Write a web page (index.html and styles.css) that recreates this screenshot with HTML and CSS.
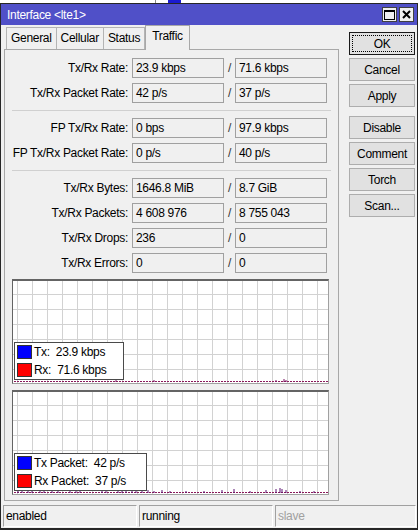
FILE: index.html
```html
<!DOCTYPE html>
<html lang="en">
<head>
    <meta charset="UTF-8">
    <title>Interface &lt;lte1&gt;</title>
    <link rel="stylesheet" href="styles.css">
</head>
<body>
    <div class="desk">
        <span class="desk-edge"></span>
        <span class="desk-icon"></span>
    </div>
    <div class="window">
        <div class="titlebar">
            <span class="title">Interface &lt;lte1&gt;</span>
            <div class="tb-btns">
                <span class="tb-btn"><span class="max-box"></span></span>
                <span class="tb-btn">
                    <svg width="9" height="9" viewBox="0 0 9 9"><path d="M1 1 L8 8 M8 1 L1 8" stroke="#000" stroke-width="2"/></svg>
                </span>
            </div>
        </div>
        <div class="main">
            <div class="left">
                <div class="tabs">
                    <span class="tab">General</span>
                    <span class="tab">Cellular</span>
                    <span class="tab">Status</span>
                    <span class="tab active">Traffic</span>
                </div>
                <div class="panel">
                    <div class="group">
                        <div class="row"><span class="label">Tx/Rx Rate:</span><span class="field">23.9 kbps</span><span class="slash">/</span><span class="field">71.6 kbps</span></div>
                        <div class="row"><span class="label">Tx/Rx Packet Rate:</span><span class="field">42 p/s</span><span class="slash">/</span><span class="field">37 p/s</span></div>
                    </div>
                    <div class="sep"></div>
                    <div class="group">
                        <div class="row"><span class="label">FP Tx/Rx Rate:</span><span class="field">0 bps</span><span class="slash">/</span><span class="field">97.9 kbps</span></div>
                        <div class="row"><span class="label">FP Tx/Rx Packet Rate:</span><span class="field">0 p/s</span><span class="slash">/</span><span class="field">40 p/s</span></div>
                    </div>
                    <div class="sep"></div>
                    <div class="group">
                        <div class="row"><span class="label">Tx/Rx Bytes:</span><span class="field">1646.8 MiB</span><span class="slash">/</span><span class="field">8.7 GiB</span></div>
                        <div class="row"><span class="label">Tx/Rx Packets:</span><span class="field">4 608 976</span><span class="slash">/</span><span class="field">8 755 043</span></div>
                        <div class="row"><span class="label">Tx/Rx Drops:</span><span class="field">236</span><span class="slash">/</span><span class="field">0</span></div>
                        <div class="row"><span class="label">Tx/Rx Errors:</span><span class="field">0</span><span class="slash">/</span><span class="field">0</span></div>
                    </div>

                    <div class="graph">
                        <div class="legend">
                            <div class="legend-row"><span class="swatch tx"></span><span class="legend-text">Tx:  23.9 kbps</span></div>
                            <div class="legend-row"><span class="swatch rx"></span><span class="legend-text">Rx:  71.6 kbps</span></div>
                        </div>
                        <svg class="trace" width="315" height="4" viewBox="0 0 315 4">
                            <path d="M0 3.5 H315" stroke="#8a1a5a" stroke-width="1" stroke-dasharray="2 1"/>
                            <path d="M102 2 V4 M140 2 V4 M262 2 V4 M270 1 V4 M272 2 V4" stroke="#7a1060" stroke-width="1"/>
                        </svg>
                    </div>

                    <div class="graph">
                        <div class="legend wide">
                            <div class="legend-row"><span class="swatch tx"></span><span class="legend-text">Tx Packet:  42 p/s</span></div>
                            <div class="legend-row"><span class="swatch rx"></span><span class="legend-text">Rx Packet:  37 p/s</span></div>
                        </div>
                        <svg class="trace" width="315" height="6" viewBox="0 0 315 6">
                            <path d="M0 5.5 H315" stroke="#8a1a5a" stroke-width="1" stroke-dasharray="2 1"/>
                            <path d="M4 3 V6 M8 3 V6 M14 3 V6 M18 4 V6 M26 3 V6 M30 3 V6 M38 3 V6 M44 4 V6 M56 3 V6 M62 3 V6 M66 4 V6 M88 3 V6 M92 3 V6 M104 3 V6 M108 3 V6 M112 3 V6 M118 3 V6 M122 4 V6 M128 3 V6 M134 3 V6 M140 4 V6 M148 3 V6 M156 4 V6 M172 4 V6 M190 4 V6 M208 3 V6 M220 2 V6 M236 4 V6 M252 3 V6 M262 2 V6 M266 1 V6 M268 2 V6 M272 3 V6 M286 4 V6 M300 4 V6" stroke="#5a1070" stroke-width="1"/>
                        </svg>
                    </div>
                </div>
            </div>
            <div class="buttons">
                <span class="btn default"><span class="focus">OK</span></span>
                <span class="btn">Cancel</span>
                <span class="btn">Apply</span>
                <span class="btn gap">Disable</span>
                <span class="btn">Comment</span>
                <span class="btn">Torch</span>
                <span class="btn">Scan...</span>
            </div>
        </div>
        <div class="statusbar">
            <span class="status s1">enabled</span>
            <span class="status s2">running</span>
            <span class="status s3 dim">slave</span>
        </div>
    </div>
</body>
</html>
```

FILE: styles.css
```css
* {
    margin: 0;
    padding: 0;
    box-sizing: border-box;
}
body {
    width: 418px;
    height: 531px;
    overflow: hidden;
    background-color: #fff;
    font-family: "Liberation Sans", Arial, sans-serif;
    font-size: 12px;
    letter-spacing: -0.3px;
    color: #000;
}
.desk {
    height: 3px;
    display: flex;
}
.desk-edge {
    width: 1px;
    margin-left: 155px;
    background-color: #888;
}
.desk-icon {
    width: 13px;
    margin-left: 12px;
    background-color: #1b1bd0;
}
.window {
    height: 527px;
    border: 1px solid #262626;
    border-bottom-width: 2px;
    background-color: #f0f0f0;
    display: flex;
    flex-direction: column;
}
.titlebar {
    height: 21px;
    background-color: #5050c8;
    display: flex;
    align-items: center;
    justify-content: space-between;
    padding: 0 3px 0 6px;
}
.title {
    color: #fff;
    font-size: 12px;
}
.tb-btns {
    display: flex;
    gap: 2px;
}
.tb-btn {
    width: 15px;
    height: 15px;
    background-color: #f0f0f0;
    border: 1px solid #404040;
    display: flex;
    align-items: center;
    justify-content: center;
}
.max-box {
    width: 11px;
    height: 10px;
    border: 1px solid #000;
    border-top-width: 2px;
}
.main {
    flex: 1;
    display: flex;
    padding: 0 0 0 3px;
}
.left {
    width: 335px;
    display: flex;
    flex-direction: column;
}
.tabs {
    display: flex;
    align-items: flex-end;
    height: 24px;
    padding-left: 2px;
}
.tab {
    height: 22px;
    padding: 0 4px;
    border: 1px solid #b4b4b4;
    border-bottom: none;
    margin-right: -1px;
    line-height: 20px;
    background-color: #f0f0f0;
}
.tab.active {
    height: 25px;
    padding: 0 6px;
    line-height: 20px;
    border-color: #a8a8a8;
    position: relative;
    margin-bottom: -1px;
    margin-left: 1px;
    z-index: 1;
}
.panel {
    height: 452px;
    border: 1px solid #a8a8a8;
    padding: 8px 7px 0 7px;
    display: flex;
    flex-direction: column;
}
.group {
    display: flex;
    flex-direction: column;
    gap: 5px;
}
.row {
    display: flex;
    height: 20px;
    align-items: center;
}
.label {
    width: 122px;
    text-align: right;
    padding-right: 4px;
    margin-left: -2px;
    white-space: nowrap;
}
.field {
    width: 92px;
    height: 20px;
    border: 1px solid #a0a0a0;
    background-color: #f0f0f0;
    padding-left: 3px;
    line-height: 18px;
    white-space: nowrap;
}
.slash {
    width: 11px;
    text-align: center;
    color: #333;
}
.sep {
    height: 1px;
    background-color: #d0d0d0;
    margin: 7px 0 7px 0;
}
.graph {
    margin-top: 6px;
    width: 317px;
    height: 105px;
    border: 1px solid #a0a0a0;
    border-top-color: #646464;
    border-left-color: #646464;
    border-top-width: 2px;
    background-color: #fff;
    background-image:
        linear-gradient(to right, #d2d2d2 1px, transparent 1px),
        linear-gradient(to bottom, #d2d2d2 1px, transparent 1px);
    background-size: 15px 15px;
    background-position: 4px 13px;
    display: flex;
    flex-direction: column;
    justify-content: flex-end;
    padding: 0 1px 1px 1px;
    position: relative;
}
.legend {
    position: absolute;
    left: 1px;
    bottom: 3px;
    width: 110px;
    height: 38px;
    background-color: #fff;
    border: 1px solid #4a4a4a;
    padding: 1px 0 0 2px;
    display: flex;
    flex-direction: column;
    gap: 2px;
}
.legend.wide {
    width: 133px;
}
.legend-row {
    display: flex;
    align-items: center;
    height: 16px;
    gap: 2px;
}
.swatch {
    width: 15px;
    height: 14px;
    border: 1px solid #333;
}
.swatch.tx {
    background-color: #0000ff;
}
.swatch.rx {
    background-color: #ff0000;
}
.legend-text {
    white-space: pre;
}
.trace {
    display: block;
}
.buttons {
    display: flex;
    flex-direction: column;
    gap: 3px;
    padding: 7px 0 0 10px;
}
.btn {
    width: 66px;
    height: 23px;
    border: 1px solid #adadad;
    background-color: #e1e1e1;
    display: flex;
    align-items: center;
    justify-content: center;
}
.btn.gap {
    margin-top: 6px;
}
.btn.default {
    border-color: #1a1a1a;
    padding: 2px;
}
.focus {
    width: 100%;
    height: 100%;
    border: 1px dotted #000;
    display: flex;
    align-items: center;
    justify-content: center;
}
.statusbar {
    height: 26px;
    display: flex;
    gap: 2px;
    padding: 3px 1px 1px 2px;
}
.status {
    height: 22px;
    border: 1px solid #a0a0a0;
    border-right-color: #fff;
    border-bottom-color: #fff;
    padding-left: 2px;
    line-height: 20px;
}
.s1 {
    width: 134px;
}
.s2 {
    width: 134px;
}
.s3 {
    flex: 1;
}
.dim {
    color: #a0a0a0;
}
```
